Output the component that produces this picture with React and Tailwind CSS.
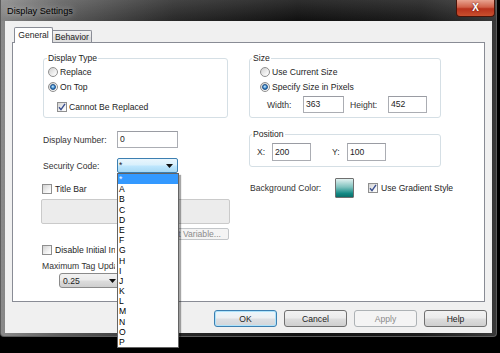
import React from "react";

const font = "font-['Liberation_Sans',Arial,sans-serif]";

function Radio({ checked }) {
  return (
    <span className="w-[10px] h-[10px] rounded-full border border-[#8f8f8f] bg-[linear-gradient(135deg,#cfcfcf,#f4f4f4_70%,#ffffff)] shrink-0 flex items-center justify-center">
      {checked && (
        <span className="w-[6px] h-[6px] rounded-full border border-[#1d4f85] bg-[radial-gradient(circle_at_45%_40%,#d4efff,#3a8ad0_55%,#0f4c8c)]" />
      )}
    </span>
  );
}

function Check({ checked }) {
  return (
    <span className="w-[10px] h-[10px] border border-[#8f8f8f] bg-[linear-gradient(135deg,#d2d2d2,#f6f6f6_70%,#ffffff)] shrink-0 flex items-center justify-center">
      {checked && (
        <svg width="8" height="8" viewBox="0 0 8 8">
          <path d="M1 4.2 L3 6.6 L7 0.8" fill="none" stroke="#3a4f8f" strokeWidth="1.4" />
        </svg>
      )}
    </span>
  );
}

function Arrow() {
  return (
    <svg width="7" height="4" viewBox="0 0 7 4">
      <polygon points="0,0 7,0 3.5,4" fill="#111" />
    </svg>
  );
}

function Input({ value, className }) {
  return (
    <div className={`h-full bg-white border border-[#abadb3] border-t-[#9a9ca3] flex items-center pl-[2px] pb-[1px] ${className}`}>
      {value}
    </div>
  );
}

function Button({ children, primary, disabled }) {
  const style = disabled
    ? "border-[#adb2b5] bg-[#f4f4f4] text-[#8b8b8b]"
    : primary
    ? "border-[#3c7fb1] bg-[linear-gradient(#eaf6fd,#eef0f2_45%,#dcdfe3_55%,#d3d6da)] shadow-[inset_0_0_0_1px_#aee3fb]"
    : "border-[#707070] bg-[linear-gradient(#f2f2f2,#ebebeb_48%,#dddddd_52%,#cfcfcf)]";
  return (
    <div className={`w-[63px] h-[17px] rounded-[3px] border flex items-center justify-center ${style}`}>
      {children}
    </div>
  );
}

const letters = ["A", "B", "C", "D", "E", "F", "G", "H", "I", "J", "K", "L", "M", "N", "O", "P"];

export default function App() {
  return (
    <div className={`relative w-[500px] h-[353px] bg-black overflow-hidden text-[8.6px] leading-[10px] text-[#1e1e1e] ${font}`}>
      {/* WINDOW */}
      <div className="w-[497px] h-[337px] flex flex-col border-x border-b border-[#5c5c5c] rounded-b-[4px] bg-[linear-gradient(90deg,#8a8a8a_0%,#5e5e5e_12%,#2a2a2a_35%,#111111_60%,#1c1c1c_85%,#3a3a3a_100%)]">
        {/* TITLE BAR */}
        <div className="h-[21px] flex justify-between shrink-0 bg-[linear-gradient(180deg,rgba(255,255,255,0.12),rgba(0,0,0,0.05))]">
          <div className="pl-[6px] pt-[6px] text-[9.2px] text-black [text-shadow:0_0_6px_rgba(255,255,255,0.7)]">Display Settings</div>
          <div className="mr-[1px] w-[39px] h-[17px] rounded-b-[4px] border border-t-0 border-[#4a1409] bg-[linear-gradient(#e8a390,#d06048_45%,#b8321c_55%,#c9502e)] flex items-center justify-center text-white text-[10px] font-bold [text-shadow:0_0_2px_#5a1000]">
            X
          </div>
        </div>

        {/* CLIENT */}
        <div className="mx-[4px] h-[312px] bg-[#f0f0f0] flex flex-col">
          {/* TABS */}
          <div className="flex items-end ml-[9px] mt-[6px]">
            <div className="relative z-10 h-[16px] w-[39px] bg-white border-x border-t border-[#898c95] rounded-t-[2px] flex items-center justify-center pb-[2px]">
              General
            </div>
            <div className="h-[12px] mb-[1px] w-[39px] border-t border-r border-[#898c95] rounded-tr-[2px] bg-[linear-gradient(#f3f3f3,#e6e6e6_50%,#dadada_51%,#e0e0e0)] flex items-center justify-center">
              Behavior
            </div>
          </div>

          {/* PANEL */}
          <div className="relative -mt-px mx-[7px] h-[260px] bg-white border border-[#898c95] flex pl-[28px] pt-[10px]">
            {/* LEFT COLUMN */}
            <div className="w-[189px] flex flex-col">
              <fieldset className="ml-[2px] w-[185px] border border-[#d5dfe5] rounded-[3px]">
                <legend className="ml-[3px] px-[1px] leading-[10px]">Display Type</legend>
                <div className="pt-[1px] pl-[4px] pb-[4px] flex flex-col">
                  <div className="h-[15px] flex items-center gap-[2px]">
                    <Radio />
                    <span>Replace</span>
                  </div>
                  <div className="h-[15px] flex items-center gap-[2px]">
                    <Radio checked />
                    <span>On Top</span>
                  </div>
                  <div className="mt-[6px] ml-[9px] h-[13px] flex items-center gap-[2px]">
                    <Check checked />
                    <span>Cannot Be Replaced</span>
                  </div>
                </div>
              </fieldset>

              <div className="mt-[13px] h-[17px] flex items-center pl-[2px]">
                <span className="w-[74px] text-[#333]">Display Number:</span>
                <Input value="0" className="w-[61px]" />
              </div>

              <div className="mt-[10px] h-[15px] flex items-center pl-[2px]">
                <span className="w-[74px] text-[#333]">Security Code:</span>
                <div className="w-[61px] h-full rounded-[2px] border border-[#3c7fb1] bg-[linear-gradient(#eaf6fd,#d9f0fc_45%,#bee6fd_55%,#a7d9f5)] flex items-start justify-between pl-[1px] pr-[4px] pt-[1px]">
                  <span>*</span>
                  <span className="self-center">
                    <Arrow />
                  </span>
                </div>
              </div>

              <div className="mt-[11px] h-[10px] flex items-center gap-[3px] pl-[1px]">
                <Check />
                <span>Title Bar</span>
              </div>

              <div className="mt-[5px] h-[25px] w-[189px] bg-[#ececec] border border-[#cacaca] rounded-[2px]" />

              <div className="mt-[4px] self-end mr-[1px] w-[82px] h-[12px] rounded-[2px] border border-[#c3c6c9] bg-[#f4f4f4] text-[#8b8b8b] flex items-center justify-end pr-[7px] overflow-hidden">
                <span className="w-[44px] overflow-hidden whitespace-nowrap flex justify-end">Select Variable...</span>
              </div>

              <div className="mt-[5px] h-[10px] flex items-center gap-[3px] pl-[1px]">
                <Check />
                <span className="w-[60px] overflow-hidden whitespace-nowrap">Disable Initial Input</span>
              </div>

              <div className="mt-[6px] h-[10px] ml-[1px] w-[73px] overflow-hidden whitespace-nowrap text-[#333]">Maximum Tag Update Rate</div>

              <div className="mt-[2px] ml-[18px] w-[66px] h-[15px] rounded-[3px] border border-[#8a8a8a] bg-[linear-gradient(#f2f2f2,#ebebeb_48%,#dddddd_52%,#cfcfcf)] flex items-center justify-between pl-[3px] pr-[8px]">
                <span>0.25</span>
                <Arrow />
              </div>
            </div>

            {/* RIGHT COLUMN */}
            <div className="ml-[19px] w-[192px] flex flex-col">
              <fieldset className="w-[192px] border border-[#d5dfe5] rounded-[3px]">
                <legend className="ml-[2px] px-[1px] leading-[10px]">Size</legend>
                <div className="pt-[1px] pb-[4px] flex flex-col">
                  <div className="pl-[10px] h-[15px] flex items-center gap-[2px]">
                    <Radio />
                    <span>Use Current Size</span>
                  </div>
                  <div className="pl-[10px] h-[15px] flex items-center gap-[2px]">
                    <Radio checked />
                    <span>Specify Size in Pixels</span>
                  </div>
                  <div className="mt-[2px] pl-[17px] h-[17px] flex items-center">
                    <span className="w-[36px] text-[#333]">Width:</span>
                    <Input value="363" className="w-[41px]" />
                    <span className="ml-[6px] w-[38px] text-[#333]">Height:</span>
                    <Input value="452" className="w-[39px]" />
                  </div>
                </div>
              </fieldset>

              <fieldset className="mt-[11px] w-[192px] border border-[#d5dfe5] rounded-[3px]">
                <legend className="ml-[2px] px-[1px] leading-[10px]">Position</legend>
                <div className="pt-[4px] pb-[5px] pl-[7px] flex items-center h-[18px] box-content">
                  <span className="w-[15px] text-[#333]">X:</span>
                  <Input value="200" className="w-[39px]" />
                  <span className="ml-[21px] w-[15px] text-[#333]">Y:</span>
                  <Input value="100" className="w-[39px]" />
                </div>
              </fieldset>

              <div className="mt-[11px] h-[20px] flex items-center pl-[1px] whitespace-nowrap">
                <span className="w-[85px] shrink-0 text-[#333]">Background Color:</span>
                <div className="w-[19px] h-[20px] shrink-0 border border-[#6f6f6f] rounded-[1px] bg-[linear-gradient(#e2f1f0,#7fc2be_45%,#138a85_80%,#0b6e69)]" />
                <span className="ml-[14px] shrink-0">
                  <Check checked />
                </span>
                <span className="ml-[3px] shrink-0">Use Gradient Style</span>
              </div>
            </div>
          </div>

          {/* BUTTONS */}
          <div className="mt-[8px] flex justify-end gap-[7px] pr-[5px]">
            <Button primary>OK</Button>
            <Button>Cancel</Button>
            <Button disabled>Apply</Button>
            <Button>Help</Button>
          </div>
        </div>
      </div>

      {/* SECURITY CODE DROPDOWN */}
      <div className="absolute left-[117px] top-[173px] w-[62px] border border-[#646464] bg-white shadow-[2px_2px_1px_rgba(0,0,0,0.35)] flex flex-col">
        <div className="h-[10.2px] bg-[#3399ff] text-white pl-[1px] leading-[10px]">*</div>
        {letters.map((l) => (
          <div key={l} className="h-[10.2px] pl-[1px] leading-[10.2px] text-black">
            {l}
          </div>
        ))}
      </div>
    </div>
  );
}
